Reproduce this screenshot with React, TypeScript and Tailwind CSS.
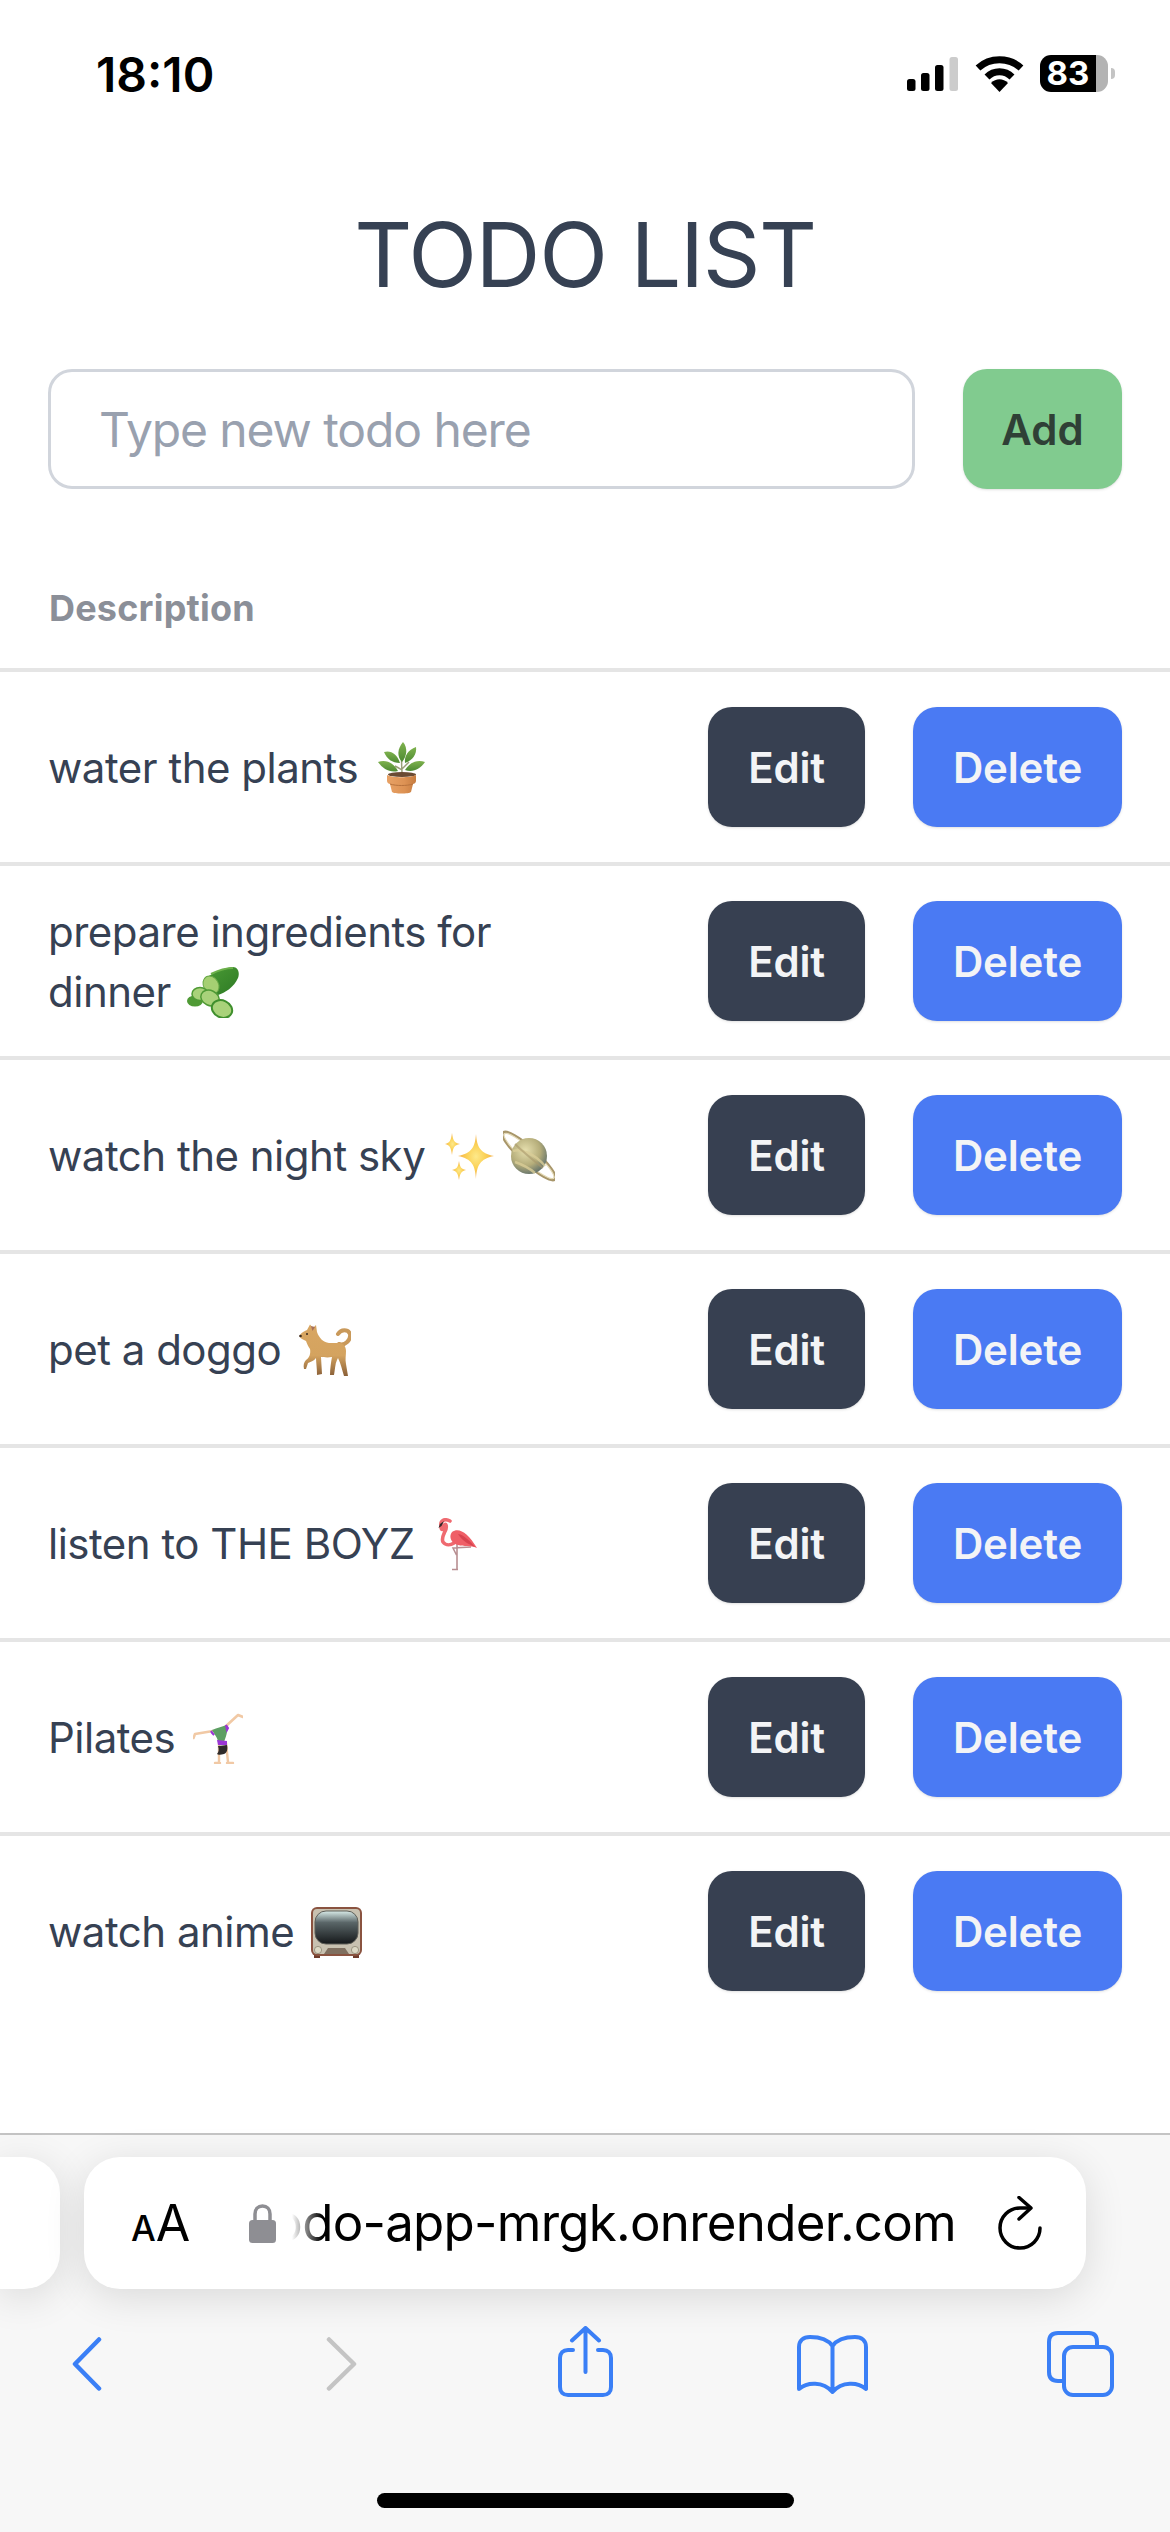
import React from "react";

const Plant = () => (
  <svg width="47" height="52" viewBox="0 0 47 52" className="ml-[4px] inline-block align-middle">
    <defs>
      <linearGradient id="leaf" x1="0" y1="0" x2="0" y2="1">
        <stop offset="0" stopColor="#7fb24e" />
        <stop offset="1" stopColor="#4d8a32" />
      </linearGradient>
      <linearGradient id="pot" x1="0" y1="0" x2="1" y2="0">
        <stop offset="0" stopColor="#e8a266" />
        <stop offset="0.6" stopColor="#dd9254" />
        <stop offset="1" stopColor="#c67c40" />
      </linearGradient>
    </defs>
    <path d="M24 32 C24 26 23 20 24 13 M24 28 C21 26 19 25 17 24 M24 27 C27 24 29 22 31 20" stroke="#9a9f78" strokeWidth="1.5" fill="none" />
    <path d="M25 0 C30 6 29 14 24 20 C19 15 19 7 25 0 Z" fill="url(#leaf)" />
    <path d="M38 5 C39 12 35 18 27 21 C26 14 30 8 38 5 Z" fill="url(#leaf)" />
    <path d="M6 10 C13 8 19 12 22 21 C14 21 9 17 6 10 Z" fill="url(#leaf)" />
    <path d="M0 20 C8 17 16 21 20 29 C12 31 5 27 0 20 Z" fill="url(#leaf)" />
    <path d="M47 20 C39 17 31 21 27 28 C35 31 42 27 47 20 Z" fill="url(#leaf)" />
    <ellipse cx="24" cy="32.5" rx="14" ry="2.5" fill="#6a4a33" />
    <path d="M9 33 C14 36 33 36 38 33 L38 39 C38 41 36 42 35 42 L33 50 C31 52 16 52 14 50 L12 42 C11 42 9 41 9 39 Z" fill="url(#pot)" />
    <path d="M12 42 C18 44 29 44 35 42" stroke="#b8723c" strokeWidth="1" fill="none" />
  </svg>
);

const Cucumber = () => (
  <svg width="52" height="51" viewBox="0 0 52 51" className="inline-block align-middle">
    <defs>
      <linearGradient id="skin" x1="0" y1="0" x2="1" y2="1">
        <stop offset="0" stopColor="#4c9c36" />
        <stop offset="1" stopColor="#2d7a24" />
      </linearGradient>
    </defs>
    <path d="M17 12 C24 7 36 1 46 0 C51 0 53 6 51 11 C47 20 38 26 31 28 C25 29 15 22 17 12 Z" fill="url(#skin)" />
    <path d="M24 7 C32 3 40 1 46 1" stroke="#6cb04a" strokeWidth="2" fill="none" />
    <ellipse cx="24" cy="18" rx="7.5" ry="9.5" transform="rotate(-30 24 18)" fill="#a5cf72" stroke="#66a845" strokeWidth="1" />
    <ellipse cx="8" cy="34" rx="8" ry="5.5" fill="#4f9a35" />
    <ellipse cx="13" cy="27" rx="8" ry="6.5" fill="#a9d27a" stroke="#4f9a35" strokeWidth="1.5" />
    <ellipse cx="23" cy="31" rx="9.5" ry="7.5" transform="rotate(25 23 31)" fill="#a9d27a" stroke="#4f9a35" strokeWidth="1.5" />
    <ellipse cx="35" cy="42" rx="10.5" ry="8.5" transform="rotate(25 35 42)" fill="#a9d27a" stroke="#3f8f2d" strokeWidth="2" />
  </svg>
);

const Sparkles = () => (
  <svg width="49" height="47" viewBox="0 0 49 47" className="ml-[3px] inline-block align-middle">
    <defs>
      <radialGradient id="spark">
        <stop offset="0" stopColor="#fde98a" />
        <stop offset="0.5" stopColor="#fbd258" />
        <stop offset="1" stopColor="#f4ae4a" />
      </radialGradient>
    </defs>
    <path d="M31 1 C32 14 35 20 49 23 C35 26 32 32 31 46 C30 32 27 26 13 23 C27 20 30 14 31 1 Z" fill="url(#spark)" />
    <path d="M7 0 C8 7 9 10 15 11 C9 12 8 15 7 22 C6 15 5 12 0 11 C5 10 6 7 7 0 Z" fill="url(#spark)" />
    <path d="M14 28 C15 34 16 36 21 37 C16 38 15 41 14 47 C13 41 12 38 7 37 C12 36 13 34 14 28 Z" fill="url(#spark)" />
  </svg>
);

const Saturn = () => (
  <svg width="52" height="52" viewBox="0 0 52 52" className="inline-block align-middle">
    <defs>
      <radialGradient id="planet" cx="0.4" cy="0.35" r="0.75">
        <stop offset="0" stopColor="#e6dfae" />
        <stop offset="0.55" stopColor="#b5ad7a" />
        <stop offset="1" stopColor="#4f6468" />
      </radialGradient>
    </defs>
    <ellipse cx="26" cy="26" rx="35" ry="8" transform="rotate(42 26 26)" fill="none" stroke="#a8966a" strokeWidth="2.5" />
    <ellipse cx="26" cy="26" rx="33" ry="6.5" transform="rotate(42 26 26)" fill="none" stroke="#e3d9b5" strokeWidth="1.2" />
    <circle cx="26" cy="26" r="18" fill="url(#planet)" />
    <path d="M10 21 C18 18 32 24 42 36 M12 32 C18 34 26 38 32 43" stroke="#d9cd97" strokeWidth="2.5" fill="none" opacity="0.8" />
    <path d="M12 14 C20 22 30 30 40 38" stroke="#a9986a" strokeWidth="2" fill="none" opacity="0.6" />
  </svg>
);

const Dog = () => (
  <svg width="52" height="53" viewBox="0 0 52 53" className="ml-[1px] inline-block align-middle">
    <defs>
      <linearGradient id="fur" x1="0" y1="0" x2="0" y2="1">
        <stop offset="0" stopColor="#d8a662" />
        <stop offset="0.6" stopColor="#d4a35f" />
        <stop offset="1" stopColor="#8a6038" />
      </linearGradient>
    </defs>
    <path d="M40 20 C46 22 52 16 51 10 C49 5 42 5 39 10" stroke="#c9995a" strokeWidth="4" fill="none" strokeLinecap="round" />
    <path d="M1 11 C3 8 6 7 8 6 L11 0.5 L14 4 L17 1 L18 8 C20 14 24 18 30 19 L40 19 C44 19 47 22 47 27 C47 32 46 35 47 40 L49 52 L45 52 C43 46 42 40 39 34 L38 36 C36 40 36 46 35 51 L31 51 C31 45 32 38 33 33 C28 34 24 33 22 33 L23 50 L18 51 C18 44 17 38 17 34 C15 37 11 38 9 39 L7 45 L5 45 C4 41 5 38 7 36 C10 34 12 30 11 25 C9 22 8 20 7 17 L3 15 C1 14 0 12 1 11 Z" fill="url(#fur)" />
    <circle cx="8" cy="10" r="1" fill="#3a2a1c" />
    <circle cx="1.5" cy="12" r="1.3" fill="#3a2a1c" />
    <path d="M12 2 L13.5 7 L16 3" fill="#a8705a" />
  </svg>
);

const Flamingo = () => (
  <svg width="39" height="53" viewBox="0 0 39 53" className="ml-[7px] inline-block align-middle">
    <path d="M19 26 V51 M14 51.5 H20 M33 29 L15 30 L18.5 37" stroke="#b88f92" strokeWidth="1.6" fill="none" />
    <path d="M12 3 C6 0 2 3 3 8 C3 13 5 12 6 8 C7 5 9 6 8 11 C6 16 3 20 5 24 C8 28 13 27 16 25" stroke="#ef6a70" strokeWidth="3.6" fill="none" strokeLinecap="round" />
    <path d="M6 3 L2 6 L0.5 10 L3.5 8 Z" fill="#33292a" />
    <path d="M14 14 C21 9 30 15 39 30 C32 27 26 29 20 27 C14 26 10 19 14 14 Z" fill="#ef5f67" />
    <path d="M20 16 C26 17 32 23 37 29 C31 26 25 24 20 16 Z" fill="#d8434f" />
  </svg>
);

const Cartwheel = () => (
  <svg width="50" height="51" viewBox="0 0 50 51" className="ml-[1px] inline-block align-middle">
    <path d="M32 14 L45 2 L50 4 M20 18 L2 21 L0.5 25" stroke="#f1c9a5" strokeWidth="2.6" fill="none" strokeLinecap="round" strokeLinejoin="round" />
    <path d="M26 30 L26 49 M22 50 H27 M33 30 L35 49 M34 50 H40" stroke="#f1c9a5" strokeWidth="2.4" fill="none" strokeLinecap="round" />
    <path d="M19 17 C24 15 30 13 34 12 C35 18 33 24 31 29 L25 29 C25 25 21 21 19 17 Z" fill="#5d9f63" />
    <path d="M18 18 L21 22 L19 20 Z M33 12 L35 15 L34 17 Z" fill="#9b35d6" stroke="#9b35d6" strokeWidth="2" />
    <path d="M24 27 L34 28 L34 32 L25 32 Z" fill="#9b35d6" />
    <path d="M25 33 L34 32 C35 36 34 40 31 41 C28 42 25 42 24 41 C26 39 26 36 25 33 Z" fill="#2f2b2b" />
  </svg>
);

const Tv = () => (
  <svg width="51" height="51" viewBox="0 0 51 51" className="inline-block align-middle">
    <defs>
      <linearGradient id="screen" x1="0" y1="0" x2="0" y2="1">
        <stop offset="0" stopColor="#d9ece9" />
        <stop offset="0.35" stopColor="#5a6668" />
        <stop offset="1" stopColor="#15181a" />
      </linearGradient>
    </defs>
    <rect x="3" y="47" width="6" height="4" fill="#6e3c2c" />
    <rect x="42" y="47" width="6" height="4" fill="#6e3c2c" />
    <rect x="0" y="0" width="51" height="49" rx="6" fill="#8a5340" />
    <rect x="2" y="2" width="47" height="45" rx="4" fill="#c8c1b0" />
    <rect x="4" y="4" width="43" height="33" rx="11" fill="url(#screen)" stroke="#5e5e58" strokeWidth="1" />
    <path d="M13 47 L17 41 H34 L38 47 Z" fill="#7f6f5f" />
    <circle cx="7" cy="43" r="3.6" fill="#dcd8c4" stroke="#8d8672" strokeWidth="0.8" />
    <circle cx="44" cy="43" r="3.6" fill="#dcd8c4" stroke="#8d8672" strokeWidth="0.8" />
  </svg>
);

const todos = [
  { text: "water the plants", icons: <Plant /> },
  { text: "prepare ingredients for dinner", icons: <Cucumber /> },
  { text: "watch the night sky", icons: <><Sparkles /><span className="ml-[9px]"><Saturn /></span></> },
  { text: "pet a doggo", icons: <Dog /> },
  { text: "listen to THE BOYZ", icons: <Flamingo /> },
  { text: "Pilates", icons: <Cartwheel /> },
  { text: "watch anime", icons: <Tv /> },
];

const StatusBar = () => (
  <div className="flex h-[132px] items-start justify-between pl-[96px] pr-[55px] pt-[48px]">
    <span className="text-[48px] font-semibold leading-[54px] text-black">18:10</span>
    <div className="flex items-start pt-[7px]">
      <svg width="51" height="34" viewBox="0 0 51 34" className="mt-[2px]">
        <rect x="0" y="22" width="8.5" height="12" rx="2.5" fill="#000" />
        <rect x="14" y="16" width="8.5" height="18" rx="2.5" fill="#000" />
        <rect x="28" y="8" width="8.5" height="26" rx="2.5" fill="#000" />
        <rect x="42.5" y="0" width="8.5" height="34" rx="2.5" fill="#ccc" />
      </svg>
      <svg width="49" height="37" viewBox="0 0 49 37" className="ml-[17px]">
        <path d="M3 13 C15 2 34 2 46 13" stroke="#000" strokeWidth="7" fill="none" />
        <path d="M12 22 C19 15 30 15 37 22" stroke="#000" strokeWidth="7" fill="none" />
        <path d="M16 28 C21 23 28 23 33 28 L24.5 37 Z" fill="#000" />
      </svg>
      <div className="ml-[16px] flex h-[37px] w-[68px]">
        <div className="flex h-full w-[56px] items-center justify-center rounded-l-[11px] bg-black text-[33px] font-bold leading-[37px] text-white">83</div>
        <div className="h-full w-[12px] rounded-r-[11px] bg-[#b3b3b3]" />
      </div>
      <div className="ml-[3px] mt-[13px] h-[11px] w-[4px] rounded-r-full bg-[#c4c4c4]" />
    </div>
  </div>
);

const SafariBar = () => (
  <div className="h-[399px] border-t-2 border-[#c4c4c4] bg-[#f7f7f7] pt-[22px]">
    <div className="flex h-[132px] gap-[24px]">
      <div className="w-[60px] rounded-r-[36px] bg-white shadow-[0_8px_40px_rgba(0,0,0,0.12)]" />
      <div className="flex w-[1002px] items-center rounded-[36px] bg-white pl-[47px] shadow-[0_8px_40px_rgba(0,0,0,0.12)]">
        <div className="flex w-[57px] items-baseline text-black">
          <span className="text-[35px] font-medium leading-none">A</span>
          <span className="text-[50px] font-normal leading-none">A</span>
        </div>
        <svg width="27" height="39" viewBox="0 0 27 39" className="ml-[61px]">
          <path d="M6 17 V10 C6 5 9 2 13.5 2 C18 2 21 5 21 10 V17" stroke="#8e8e93" strokeWidth="3.5" fill="none" />
          <rect x="0" y="16" width="27" height="23" rx="3.5" fill="#8e8e93" />
        </svg>
        <div className="relative ml-[16px] flex w-[664px] justify-end overflow-hidden">
          <span className="whitespace-nowrap text-[51px] leading-[64px] tracking-[-0.75px] text-black">todo-app-mrgk.onrender.com</span>
          <div className="absolute inset-y-0 left-0 w-[30px] bg-gradient-to-r from-white to-transparent" />
        </div>
        <svg width="44" height="54" viewBox="0 0 44 54" className="ml-[42px]">
          <path d="M32 12 H22 A20 20 0 1 0 42 32" stroke="#000" strokeWidth="3.5" fill="none" strokeLinecap="round" />
          <path d="M21 1.5 L33 12 L21 23" stroke="#000" strokeWidth="3.5" fill="none" strokeLinecap="round" strokeLinejoin="round" />
        </svg>
      </div>
    </div>
    <div className="mt-[35px] flex items-start pl-[72px]">
      <svg width="30" height="54" viewBox="0 0 30 54" className="mt-[13px]">
        <path d="M27 2.5 L3 27 L27 51.5" stroke="#3a7ff6" strokeWidth="4.5" fill="none" strokeLinecap="round" strokeLinejoin="round" />
      </svg>
      <svg width="31" height="54" viewBox="0 0 31 54" className="ml-[224px] mt-[13px]">
        <path d="M3 2.5 L28 27 L3 51.5" stroke="#c4c4c4" strokeWidth="4.5" fill="none" strokeLinecap="round" strokeLinejoin="round" />
      </svg>
      <svg width="55" height="71" viewBox="0 0 55 71" className="ml-[201px] mt-[2px]">
        <path d="M27.5 2 V46 M14 14.5 L27.5 2 L41 14.5" stroke="#3a7ff6" strokeWidth="4" fill="none" strokeLinecap="round" strokeLinejoin="round" />
        <path d="M15 24 H10 C5 24 2 27 2 32 V61 C2 66 5 69 10 69 H45 C50 69 53 66 53 61 V32 C53 27 50 24 45 24 H40" stroke="#3a7ff6" strokeWidth="4" fill="none" strokeLinecap="round" />
      </svg>
      <svg width="71" height="59" viewBox="0 0 71 59" className="ml-[184px] mt-[11px]">
        <path d="M35.5 11 C30 3 20 2 13 2 C6 2 2 6 2 12 V54 C10 47 26 46 35.5 57 C45 46 61 47 69 54 V12 C69 6 65 2 58 2 C51 2 41 3 35.5 11 Z M35.5 11 V55" stroke="#3a7ff6" strokeWidth="4" fill="none" strokeLinejoin="round" />
      </svg>
      <svg width="67" height="66" viewBox="0 0 67 66" className="ml-[179px] mt-[7px]">
        <path d="M15 50 H11 C5 50 2 47 2 41 V11 C2 5 5 2 11 2 H42 C47 2 50 5 50 11 V15" stroke="#3a7ff6" strokeWidth="4" fill="none" />
        <rect x="17" y="16" width="48" height="48" rx="9" stroke="#3a7ff6" strokeWidth="4" fill="none" />
      </svg>
    </div>
    <div className="mx-auto mt-[96px] h-[15px] w-[417px] rounded-full bg-black" />
  </div>
);

export default function App() {
  return (
    <div className="flex h-[2532px] flex-col bg-white font-['Inter',sans-serif]">
      <StatusBar />
      <main className="flex-1">
        <h1 className="mt-[69px] text-center text-[90px] font-normal leading-[108px] tracking-[-1.4px] text-gray-700">TODO LIST</h1>
        <div className="mt-[60px] flex items-center justify-between px-[48px]">
          <input
            readOnly
            placeholder="Type new todo here"
            className="h-[120px] w-[867px] rounded-[24px] border-[3px] border-gray-300 pl-[48px] text-[48px] tracking-[-1.1px] outline-none placeholder:text-gray-400"
          />
          <button className="h-[120px] w-[159px] rounded-[24px] bg-[#81cb8f] text-[42px] font-semibold text-[#2f4036] shadow-sm">Add</button>
        </div>
        <div className="mt-[72px] flex h-[111px] items-start border-b-4 border-[#e5e5e5] pl-[49px] pt-[20px]">
          <span className="text-[36px] font-bold leading-[54px] tracking-[0.2px] text-[#8b8f98]">Description</span>
        </div>
        {todos.map((todo, i) => (
          <div key={i} className="flex h-[194px] items-center justify-between border-b-4 border-[#e5e5e5] px-[48px] last:border-b-transparent">
            <p className="w-[540px] pt-[6px] text-[42px] leading-[60px] tracking-[-0.5px] text-gray-700">
              {todo.text} <span className="ml-[5px] inline-block -translate-y-[7px] align-middle">{todo.icons}</span>
            </p>
            <div className="flex gap-[48px]">
              <button className="h-[120px] w-[157px] rounded-[24px] bg-[#374051] text-[42px] font-semibold tracking-[-0.2px] text-gray-100 shadow-sm">Edit</button>
              <button className="h-[120px] w-[209px] rounded-[24px] bg-[#4a7af3] text-[42px] font-semibold tracking-[-0.2px] text-gray-100 shadow-sm">Delete</button>
            </div>
          </div>
        ))}
      </main>
      <SafariBar />
    </div>
  );
}
